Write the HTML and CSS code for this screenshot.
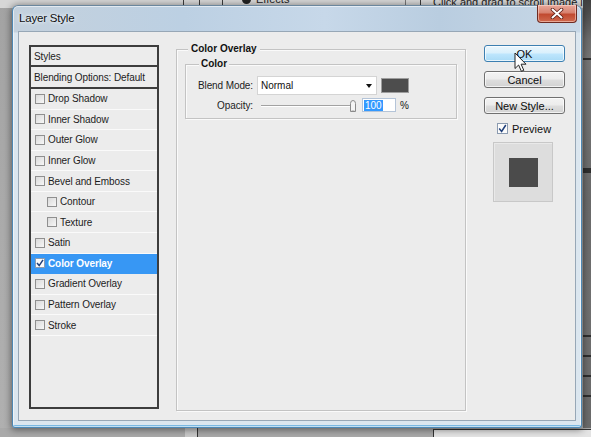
FILE: index.html
```html
<!DOCTYPE html>
<html lang="en">
<head>
<meta charset="utf-8">
<title>Layer Style</title>
<link rel="stylesheet" href="styles.css">
</head>
<body>
<div class="desk">
  <div class="bg-top">
    <span class="vline v1"></span>
    <span class="vline v2"></span>
    <span class="vline v3"></span>
    <span class="vline v4"></span>
    <span class="vline v5"></span>
    <span class="bg-effects"><span class="eye"></span>Effects</span>
    <span class="bg-hint">Click and drag to scroll image in desired</span>
  </div>
  <div class="bg-right">
    <span class="hl h1"></span>
    <span class="hl h2"></span>
    <span class="hl h3"></span>
    <span class="hl h4"></span>
    <span class="hl h5"></span>
    <span class="hl h6"></span>
  </div>
  <div class="bg-bottom">
    <span class="bb-block"></span>
    <span class="bb-panel"></span>
  </div>

  <div class="window">
    <div class="titlebar">
      <span class="title">Layer Style</span>
      <button class="close" aria-label="Close">
        <svg width="14" height="11" viewBox="0 0 14 11"><path d="M2.5 1.5 L11.5 9.5 M11.5 1.5 L2.5 9.5" stroke="#5a1a12" stroke-width="3.6" stroke-linecap="round"/><path d="M2.5 1.5 L11.5 9.5 M11.5 1.5 L2.5 9.5" stroke="#ffffff" stroke-width="2" stroke-linecap="round"/></svg>
      </button>
    </div>
    <div class="client">
      <div class="list">
        <div class="list-head styles-head">Styles</div>
        <div class="list-head blend-head">Blending Options: Default</div>
        <div class="item"><span class="cb"></span>Drop Shadow</div>
        <div class="item"><span class="cb"></span>Inner Shadow</div>
        <div class="item"><span class="cb"></span>Outer Glow</div>
        <div class="item"><span class="cb"></span>Inner Glow</div>
        <div class="item"><span class="cb"></span>Bevel and Emboss</div>
        <div class="item sub"><span class="cb"></span>Contour</div>
        <div class="item sub"><span class="cb"></span>Texture</div>
        <div class="item"><span class="cb"></span>Satin</div>
        <div class="item sel"><span class="cb on"><svg width="8" height="8" viewBox="0 0 8 8"><path d="M1 4 L3.2 6.6 L7 0.8" fill="none" stroke="#1f3f7a" stroke-width="1.5"/></svg></span>Color Overlay</div>
        <div class="item"><span class="cb"></span>Gradient Overlay</div>
        <div class="item"><span class="cb"></span>Pattern Overlay</div>
        <div class="item"><span class="cb"></span>Stroke</div>
      </div>

      <fieldset class="group outer">
        <legend>Color Overlay</legend>
        <fieldset class="group inner">
          <legend>Color</legend>
          <div class="form">
            <span class="lbl">Blend Mode:</span>
            <div class="ctrl">
              <div class="select">Normal<span class="arrow"></span></div>
              <span class="swatch"></span>
            </div>
            <span class="lbl">Opacity:</span>
            <div class="ctrl">
              <div class="slider">
                <span class="track"></span>
                <svg class="thumb" width="8" height="13" viewBox="0 0 8 13"><path d="M1.5 12.5 V4.5 Q1.5 1.5 4 1.5 Q6.5 1.5 6.5 4.5 V12.5 Z" fill="#f4f4f4" stroke="#8a8a8a"/><path d="M2.5 11.5 H5.5" stroke="#c8c8c8"/></svg>
              </div>
              <div class="num"><span class="selected">100</span></div>
              <span class="pct">%</span>
            </div>
          </div>
        </fieldset>
      </fieldset>

      <div class="side">
        <button class="btn default">OK</button>
        <button class="btn">Cancel</button>
        <button class="btn">New Style...</button>
        <div class="preview-row"><span class="cb big on"><svg width="9" height="9" viewBox="0 0 9 9"><path d="M1.2 4.6 L3.6 7.4 L7.8 1" fill="none" stroke="#1f3f7a" stroke-width="1.5"/></svg></span>Preview</div>
        <div class="preview"><span class="preview-swatch"></span></div>
      </div>
    </div>
  </div>

  <svg class="cursor" width="14" height="21" viewBox="0 0 14 21"><path d="M1 1 V16.5 L4.6 13 L7.4 19.3 L9.8 18.3 L7.1 12.2 L12 12.2 Z" fill="#ffffff" stroke="#222" stroke-width="1" stroke-linejoin="round"/></svg>
</div>
</body>
</html>
```

FILE: styles.css
```css
html, body {
  margin: 0;
  padding: 0;
}

body {
  width: 591px;
  height: 437px;
  overflow: hidden;
  font-family: "Liberation Sans", Arial, sans-serif;
  color: #151515;
}

.desk {
  position: relative;
  width: 591px;
  height: 437px;
  background: linear-gradient(to bottom, #a3a3a3, #acacac 60%, #b0b0b0);
  overflow: hidden;
}

/* ---------- blurred background (Photoshop behind the dialog) ---------- */
.bg-top {
  position: absolute;
  left: 0;
  top: 0;
  width: 591px;
  height: 8px;
  background: #d7d7d7;
  overflow: hidden;
}

.vline {
  position: absolute;
  top: 0;
  width: 1px;
  height: 8px;
  background: #3c3c3c;
}
.v1 { left: 183px; }
.v2 { left: 199px; }
.v3 { left: 222px; }
.v4 { left: 405px; background: #777; }
.v5 { left: 420px; }

.bg-effects {
  position: absolute;
  left: 242px;
  top: -7px;
  font-size: 11px;
  color: #222;
  display: flex;
  align-items: center;
  gap: 5px;
}
.eye {
  width: 9px;
  height: 9px;
  border-radius: 50%;
  background: #222;
}

.bg-hint {
  position: absolute;
  left: 433px;
  top: -4px;
  font-size: 11px;
  color: #222;
  white-space: nowrap;
}

.bg-right {
  position: absolute;
  left: 583px;
  top: 0;
  width: 8px;
  height: 437px;
  background: linear-gradient(to bottom, #3f3f3f 0, #6d6d6d 40px, #767676 60px, #6a6a6a 200px, #707070 300px, #6a6a6a 437px);
}
.hl {
  position: absolute;
  left: 0;
  width: 8px;
  height: 2px;
  background: #2e2e2e;
}
.h1 { top: 58px; }
.h2 { top: 168px; height: 5px; }
.h3 { top: 335px; }
.h4 { top: 355px; }
.h5 { top: 375px; }
.h6 { top: 395px; }

.bg-bottom {
  position: absolute;
  left: 0;
  top: 428px;
  width: 591px;
  height: 9px;
  background: #a9a9a9;
}
.bb-block {
  position: absolute;
  left: 185px;
  top: 0;
  width: 12px;
  height: 9px;
  background: #c9c9c9;
  border-right: 1px solid #333;
}
.bb-panel {
  position: absolute;
  left: 433px;
  top: 1px;
  width: 158px;
  height: 8px;
  background: #e4e4e4;
  border-top: 1px solid #333;
  border-left: 1px solid #333;
}

/* ---------- dialog window ---------- */
.window {
  position: absolute;
  left: 12px;
  top: 5px;
  width: 570px;
  height: 423px;
  box-sizing: border-box;
  border: 1px solid #4e88b4;
  border-top-color: #6b879e;
  border-radius: 6px 6px 3px 3px;
  background:
    linear-gradient(to bottom, rgba(255,255,255,0) 0, rgba(255,255,255,0) 26px, #dbe6ef 27px, #dbe6ef 100%),
    linear-gradient(to right, #c4d1dd, #bcd0e3 30%, #c7d8e9 55%, #b9cde0 75%, #c8d8e7);
  box-shadow: 0 1px 7px 1px rgba(0, 0, 0, 0.45), inset 0 0 0 1px rgba(255, 255, 255, 0.55), inset 0 -3px 0 -1px #79b8e2;
  display: flex;
  flex-direction: column;
}

.titlebar {
  height: 25px;
  flex: none;
  display: flex;
  align-items: flex-start;
  padding-left: 6px;
}

.title {
  margin-top: 6px;
  font-size: 11.5px;
  line-height: 13px;
  color: #101010;
  letter-spacing: -0.2px;
  text-shadow: 0 0 5px #eef4fa, 0 0 3px #eef4fa;
}

.close {
  margin-left: auto;
  margin-right: 4px;
  margin-top: -1px;
  width: 40px;
  height: 18px;
  padding: 0;
  border: 1px solid #6e2b22;
  border-top: none;
  border-radius: 0 0 4px 4px;
  background: linear-gradient(to bottom, #e9a99c 0, #d7826f 45%, #c14a30 55%, #cf6a4f 100%);
  box-shadow: inset 0 0 0 1px rgba(255, 220, 210, 0.55);
  display: flex;
  align-items: center;
  justify-content: center;
}

.client {
  flex: 1;
  margin: 0 5px 6px 5px;
  box-sizing: border-box;
  border: 1px solid #97a7b6;
  background: #ececec;
  padding: 13px 10px 0 10px;
  display: flex;
  align-items: flex-start;
}

/* ---------- styles list ---------- */
.list {
  flex: none;
  width: 130px;
  height: 364px;
  box-sizing: border-box;
  border: 2px solid #3d3d3d;
  background: #ececec;
  font-size: 10px;
  letter-spacing: -0.1px;
  color: #1c1c1c;
}

.list-head {
  border-bottom: 2px solid #3d3d3d;
  padding-left: 3px;
  display: flex;
  align-items: center;
}
.styles-head { height: 18px; }
.blend-head { height: 20px; }

.item {
  height: 20.58px;
  box-sizing: border-box;
  border-bottom: 1px solid #fafafa;
  padding-left: 4px;
  display: flex;
  align-items: center;
  white-space: nowrap;
}
.item.sub { padding-left: 16px; }
.item.sel {
  background: #3797f4;
  color: #ffffff;
  font-weight: bold;
  border-bottom-color: #3797f4;
}

.cb {
  flex: none;
  width: 10px;
  height: 10px;
  box-sizing: border-box;
  border: 1px solid #8f8f8f;
  background: linear-gradient(135deg, #d9d9d9, #f7f7f7);
  margin-right: 3px;
  display: flex;
  align-items: center;
  justify-content: center;
}
.cb.on {
  background: #fbfbfb;
  border-color: #8b9bb0;
}
.cb.big {
  width: 11px;
  height: 11px;
  margin-right: 4px;
}

/* ---------- group boxes ---------- */
.group {
  margin: 0;
  min-width: 0;
  box-sizing: border-box;
  border: 1px solid #c3c3c3;
  box-shadow: inset 1px 1px 0 #fafafa, 1px 1px 0 #fafafa;
}
.group legend {
  font-size: 10px;
  font-weight: bold;
  line-height: 12px;
  color: #111;
  background: #ececec;
}

.outer {
  flex: none;
  width: 290px;
  height: 368px;
  margin: -2px 0 0 17px;
  padding: 0 8px;
}
.outer > legend {
  margin-left: 3px;
  padding: 0 3px;
}

.inner {
  width: 272px;
  margin-top: 3px;
  padding: 6px 0 6px 0;
}
.inner > legend {
  margin-left: 13px;
  padding: 0 2px;
}

.form {
  display: grid;
  grid-template-columns: 67px 1fr;
  column-gap: 4px;
  row-gap: 3px;
  align-items: center;
  font-size: 10px;
}

.lbl {
  text-align: right;
  color: #1c1c1c;
  letter-spacing: -0.1px;
}

.ctrl {
  display: flex;
  align-items: center;
}

.select {
  position: relative;
  width: 120px;
  height: 19px;
  box-sizing: border-box;
  background: #ffffff;
  border: 1px solid #d4d4d4;
  padding-left: 3px;
  display: flex;
  align-items: center;
  font-size: 10px;
  color: #111;
}
.arrow {
  position: absolute;
  right: 4px;
  top: 7px;
  width: 0;
  height: 0;
  border-left: 3.5px solid transparent;
  border-right: 3.5px solid transparent;
  border-top: 4px solid #111;
}

.swatch {
  margin-left: 4px;
  width: 28px;
  height: 15px;
  box-sizing: border-box;
  background: #4d4d4d;
  border: 1px solid #9d9d9d;
}

.slider {
  position: relative;
  width: 100px;
  height: 14px;
}
.track {
  position: absolute;
  left: 4px;
  right: 2px;
  top: 7px;
  height: 1px;
  background: #a2a2a2;
  box-shadow: 0 1px 0 #ffffff;
}
.thumb {
  position: absolute;
  left: 92px;
  top: 1px;
}

.num {
  margin-left: 5px;
  width: 34px;
  height: 14px;
  box-sizing: border-box;
  background: #ffffff;
  border: 1px solid #b4c4d8;
  padding-left: 1px;
  display: flex;
  align-items: center;
}
.selected {
  background: #3399ff;
  color: #ffffff;
  font-size: 10px;
  line-height: 11px;
  padding: 0 1px;
}
.pct {
  margin-left: 4px;
  font-size: 10px;
}

/* ---------- right column ---------- */
.side {
  flex: none;
  width: 81px;
  margin-left: 18px;
  display: flex;
  flex-direction: column;
}

.btn {
  height: 17px;
  width: 81px;
  padding: 0;
  box-sizing: border-box;
  border: 1px solid #707070;
  border-radius: 3px;
  background: linear-gradient(to bottom, #f3f3f3 0, #ececec 48%, #dedede 52%, #d2d2d2 100%);
  box-shadow: inset 0 0 0 1px rgba(255, 255, 255, 0.7);
  font-family: "Liberation Sans", Arial, sans-serif;
  font-size: 11px;
  line-height: 14px;
  color: #0c0c0c;
}
.btn + .btn { margin-top: 9px; }
.btn.default {
  border-color: #3c7fb1;
  background: linear-gradient(to bottom, #eaf6fd 0, #d9f0fc 48%, #bee6fd 52%, #a9dbf6 100%);
}

.preview-row {
  margin-top: 9px;
  padding-left: 13px;
  height: 11px;
  display: flex;
  align-items: center;
  font-size: 11px;
  color: #111;
}

.preview {
  margin: 8px 0 0 9px;
  width: 60px;
  height: 60px;
  box-sizing: border-box;
  background: #dddddd;
  border: 1px solid #c8c8c8;
  box-shadow: inset 1px 1px 0 #e9e9e9;
  display: flex;
  align-items: center;
  justify-content: center;
}
.preview-swatch {
  width: 29px;
  height: 29px;
  background: #4b4b4b;
}

/* ---------- mouse pointer ---------- */
.cursor {
  position: absolute;
  left: 514px;
  top: 52px;
}
```
